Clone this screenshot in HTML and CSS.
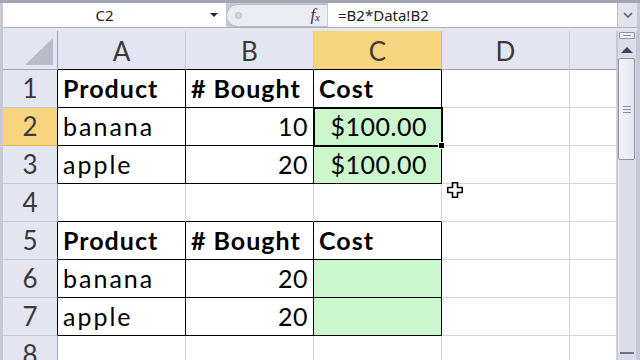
FILE: index.html
```html
<!DOCTYPE html>
<html>
<head>
<meta charset="utf-8">
<link rel="stylesheet" href="styles.css">
</head>
<body>
<div class="app">
  <div class="topstrip"></div>
  <div class="fbar">
    <div class="namebox"><span class="ref">C2</span><span class="caret"></span></div>
    <div class="fxzone"><span class="knob"></span><span class="fx">f<sub>x</sub></span></div>
    <div class="formula">=B2*Data!B2</div>
    <div class="expand"><svg width="10" height="6" viewBox="0 0 10 6"><path d="M1 1 L5 5 L9 1" fill="none" stroke="#5a5c68" stroke-width="1.6"/></svg></div>
  </div>
  <div class="gap"></div>
  <div class="main">
    <div class="sheet">
      <div class="corner"><svg width="54" height="38" viewBox="0 0 54 38"><polygon points="22,34 50,34 50,7" fill="#b9bbc8"/></svg></div>
      <div class="hd tt">A</div>
      <div class="hd tt">B</div>
      <div class="hd tt sel">C</div>
      <div class="hd">D</div>
      <div class="hd"></div>

      <div class="rh tl">1</div>
      <div class="c t b">Product</div>
      <div class="c t b"># Bought</div>
      <div class="c t b">Cost</div>
      <div class="c"></div>
      <div class="c"></div>

      <div class="rh tl sel">2</div>
      <div class="c t w">banana</div>
      <div class="c t num">10</div>
      <div class="c t g cur num money">$100.00<span class="handle"></span></div>
      <div class="c"></div>
      <div class="c"></div>

      <div class="rh tl">3</div>
      <div class="c t w">apple</div>
      <div class="c t num">20</div>
      <div class="c t g num money">$100.00</div>
      <div class="c"></div>
      <div class="c"></div>

      <div class="rh">4</div>
      <div class="c tb"></div>
      <div class="c tb"></div>
      <div class="c tb"></div>
      <div class="c"></div>
      <div class="c"></div>

      <div class="rh tl">5</div>
      <div class="c t b">Product</div>
      <div class="c t b"># Bought</div>
      <div class="c t b">Cost</div>
      <div class="c"></div>
      <div class="c"></div>

      <div class="rh tl">6</div>
      <div class="c t w">banana</div>
      <div class="c t num">20</div>
      <div class="c t g"></div>
      <div class="c"></div>
      <div class="c"></div>

      <div class="rh tl">7</div>
      <div class="c t w">apple</div>
      <div class="c t num">20</div>
      <div class="c t g"></div>
      <div class="c"></div>
      <div class="c"></div>

      <div class="rh">8</div>
      <div class="c"></div>
      <div class="c"></div>
      <div class="c"></div>
      <div class="c"></div>
      <div class="c"></div>
    </div>
    <div class="vscroll">
      <div class="split"></div>
      <div class="upbtn"><svg width="12" height="6" viewBox="0 0 12 6"><polygon points="0,6 12,6 6,0" fill="#3f4150"/></svg></div>
      <div class="thumb"><span class="grip"></span></div>
      <div class="track"></div>
      <div class="downbtn"></div>
    </div>
  </div>
  <svg class="cursor" width="16" height="16" viewBox="0 0 16 16"><path d="M5.5 0.75 H10.5 V5.5 H15.25 V10.5 H10.5 V15.25 H5.5 V10.5 H0.75 V5.5 H5.5 Z" fill="#fff" stroke="#000" stroke-width="1.6" stroke-linejoin="round"/></svg>
</div>
</body>
</html>
```
FILE: styles.css
```css
* { box-sizing: border-box; margin: 0; padding: 0; }
html, body { width: 640px; height: 360px; overflow: hidden; background: #c9cbd6; }
body { font-family: Lato, "Liberation Sans", sans-serif; }

.app {
  width: 640px;
  height: 360px;
  display: flex;
  flex-direction: column;
  position: relative;
  overflow: hidden;
  background: #c6c8d3;
}

.topstrip { height: 3px; flex: none; background: #a3a5b1; }

.fbar {
  height: 25px;
  flex: none;
  display: flex;
  margin: 0 3px;
  border-bottom: 1px solid #aeb1be;
  font-family: "Noto Sans", "Open Sans", sans-serif;
  font-size: 15px;
  color: #222;
}
.namebox {
  width: 223px;
  background: #fff;
  display: flex;
  align-items: center;
}
.namebox .ref { flex: 1; text-align: center; padding-right: 4px; line-height: 24px; }
.namebox .caret {
  width: 0; height: 0;
  margin-right: 8px;
  border-left: 4px solid transparent;
  border-right: 4px solid transparent;
  border-top: 4px solid #222;
}
.fxzone {
  width: 101px;
  display: flex;
  align-items: center;
  justify-content: space-between;
  padding: 0 7px 0 7px;
  background: #ebecf3;
  border: 1px solid #b9bcc9;
  border-right: none;
  border-radius: 13px 0 0 13px;
  margin-top: 1px;
}
.knob {
  width: 7px; height: 7px;
  border-radius: 50%;
  background: #d4d6df;
  border: 1px solid #b4b7c3;
  margin-left: 1px;
}
.fx {
  font-family: "Liberation Serif", serif;
  font-style: italic;
  font-size: 17px;
  color: #2f3040;
  line-height: 20px;
}
.fx sub { font-size: 11px; vertical-align: -1px; }
.formula {
  flex: 1;
  background: #fff;
  padding-left: 10px;
  line-height: 24px;
  border-left: 1px solid #c9cbd6;
}
.expand {
  width: 20px;
  display: flex;
  align-items: center;
  justify-content: center;
  background: #e2e3ec;
  border-left: 1px solid #b9bcc9;
}

.gap { height: 3px; flex: none; background: #e5e7f0; margin: 0 3px; }

.main {
  flex: 1;
  display: flex;
  padding: 0 4px 0 3px;
  min-height: 0;
}

.sheet {
  width: 614px;
  flex: none;
  display: grid;
  grid-template-columns: 55px 128px 128px 128px 128px 47px;
  grid-template-rows: 39px repeat(8, 38px);
  align-content: start;
  background: #fff;
  overflow: hidden;
}

.corner {
  background: #e3e5f0;
  border-right: 1px solid #9fa3b5;
  border-bottom: 1px solid #9fa3b5;
}
.corner svg { display: block; }

.hd {
  background: #e3e5f0;
  border-right: 1px solid #c6c9d7;
  border-bottom: 1px solid #9fa3b5;
  text-align: center;
  font-size: 26px;
  line-height: 38px;
  padding-top: 1px;
  color: #3a3a3a;
}
.rh {
  background: #e3e5f0;
  border-right: 1px solid #9fa3b5;
  border-bottom: 1px solid #c6c9d7;
  text-align: center;
  font-size: 26px;
  line-height: 37px;
  color: #3a3a3a;
}
.hd.sel, .rh.sel { background: #f8d47e; }
.hd.sel { border-right-color: #e2b95a; }
.rh.sel { border-bottom-color: #e2b95a; }
.hd.tt { border-bottom-color: #000; }
.rh.tl { border-right-color: #000; }

.c {
  position: relative;
  background: #fff;
  border-right: 1px solid #d5d6de;
  border-bottom: 1px solid #d5d6de;
  font-size: 25px;
  line-height: 37px;
  padding: 0 5px;
  white-space: nowrap;
  color: #000;
}
.c.t { border-right-color: #000; border-bottom-color: #000; }
.c.tb { border-bottom-color: #000; }
.b { font-weight: 700; letter-spacing: 1px; }
.w { letter-spacing: 2px; }
.num { text-align: right; letter-spacing: 0.5px; padding-right: 5px; }
.money { padding-right: 14px; }
.g { background: #ccf6cc; }

.cur {
  outline: 2px solid #000;
  outline-offset: -1px;
  z-index: 2;
}
.handle {
  position: absolute;
  right: -4px;
  bottom: -4px;
  width: 7px;
  height: 7px;
  background: #000;
  border: 1px solid #fff;
}

.vscroll {
  width: 19px;
  flex: none;
  display: flex;
  flex-direction: column;
  background: #dcdbea;
  border-left: 1px solid #c3c4d4;
}
.split {
  height: 7px;
  margin: 1px 1px 0 1px;
  background: #f1f1f6;
  border: 1px solid #8e90a3;
  border-radius: 1px;
  position: relative;
}
.split::after {
  content: "";
  position: absolute;
  left: 3px; right: 3px; top: 2px;
  height: 1px;
  background: #8e90a3;
}
.upbtn {
  height: 19px;
  display: flex;
  align-items: center;
  justify-content: center;
  padding-top: 2px;
}
.upbtn svg { display: block; }
.thumb {
  height: 102px;
  margin: 0 1px 0 0;
  background: linear-gradient(90deg, #f3f3f8, #e6e6f0);
  border: 1px solid #8f91a6;
  border-radius: 2px;
  display: flex;
  align-items: center;
  justify-content: center;
}
.grip {
  width: 8px;
  height: 7px;
  border-top: 1px solid #8a8ca0;
  border-bottom: 1px solid #8a8ca0;
  position: relative;
}
.grip::after {
  content: "";
  position: absolute;
  left: 0; right: 0; top: 2px;
  height: 1px;
  background: #8a8ca0;
}
.track {
  flex: 1;
  background: linear-gradient(90deg, #e9e8f2 0, #dcdbea 3px, #dcdbea 100%);
}
.downbtn {
  height: 8px;
  background: #dcdbea;
  border-top: 2px solid #6f7185;
  margin: 0 2px;
}

.cursor {
  position: absolute;
  left: 447px;
  top: 182px;
}
```
